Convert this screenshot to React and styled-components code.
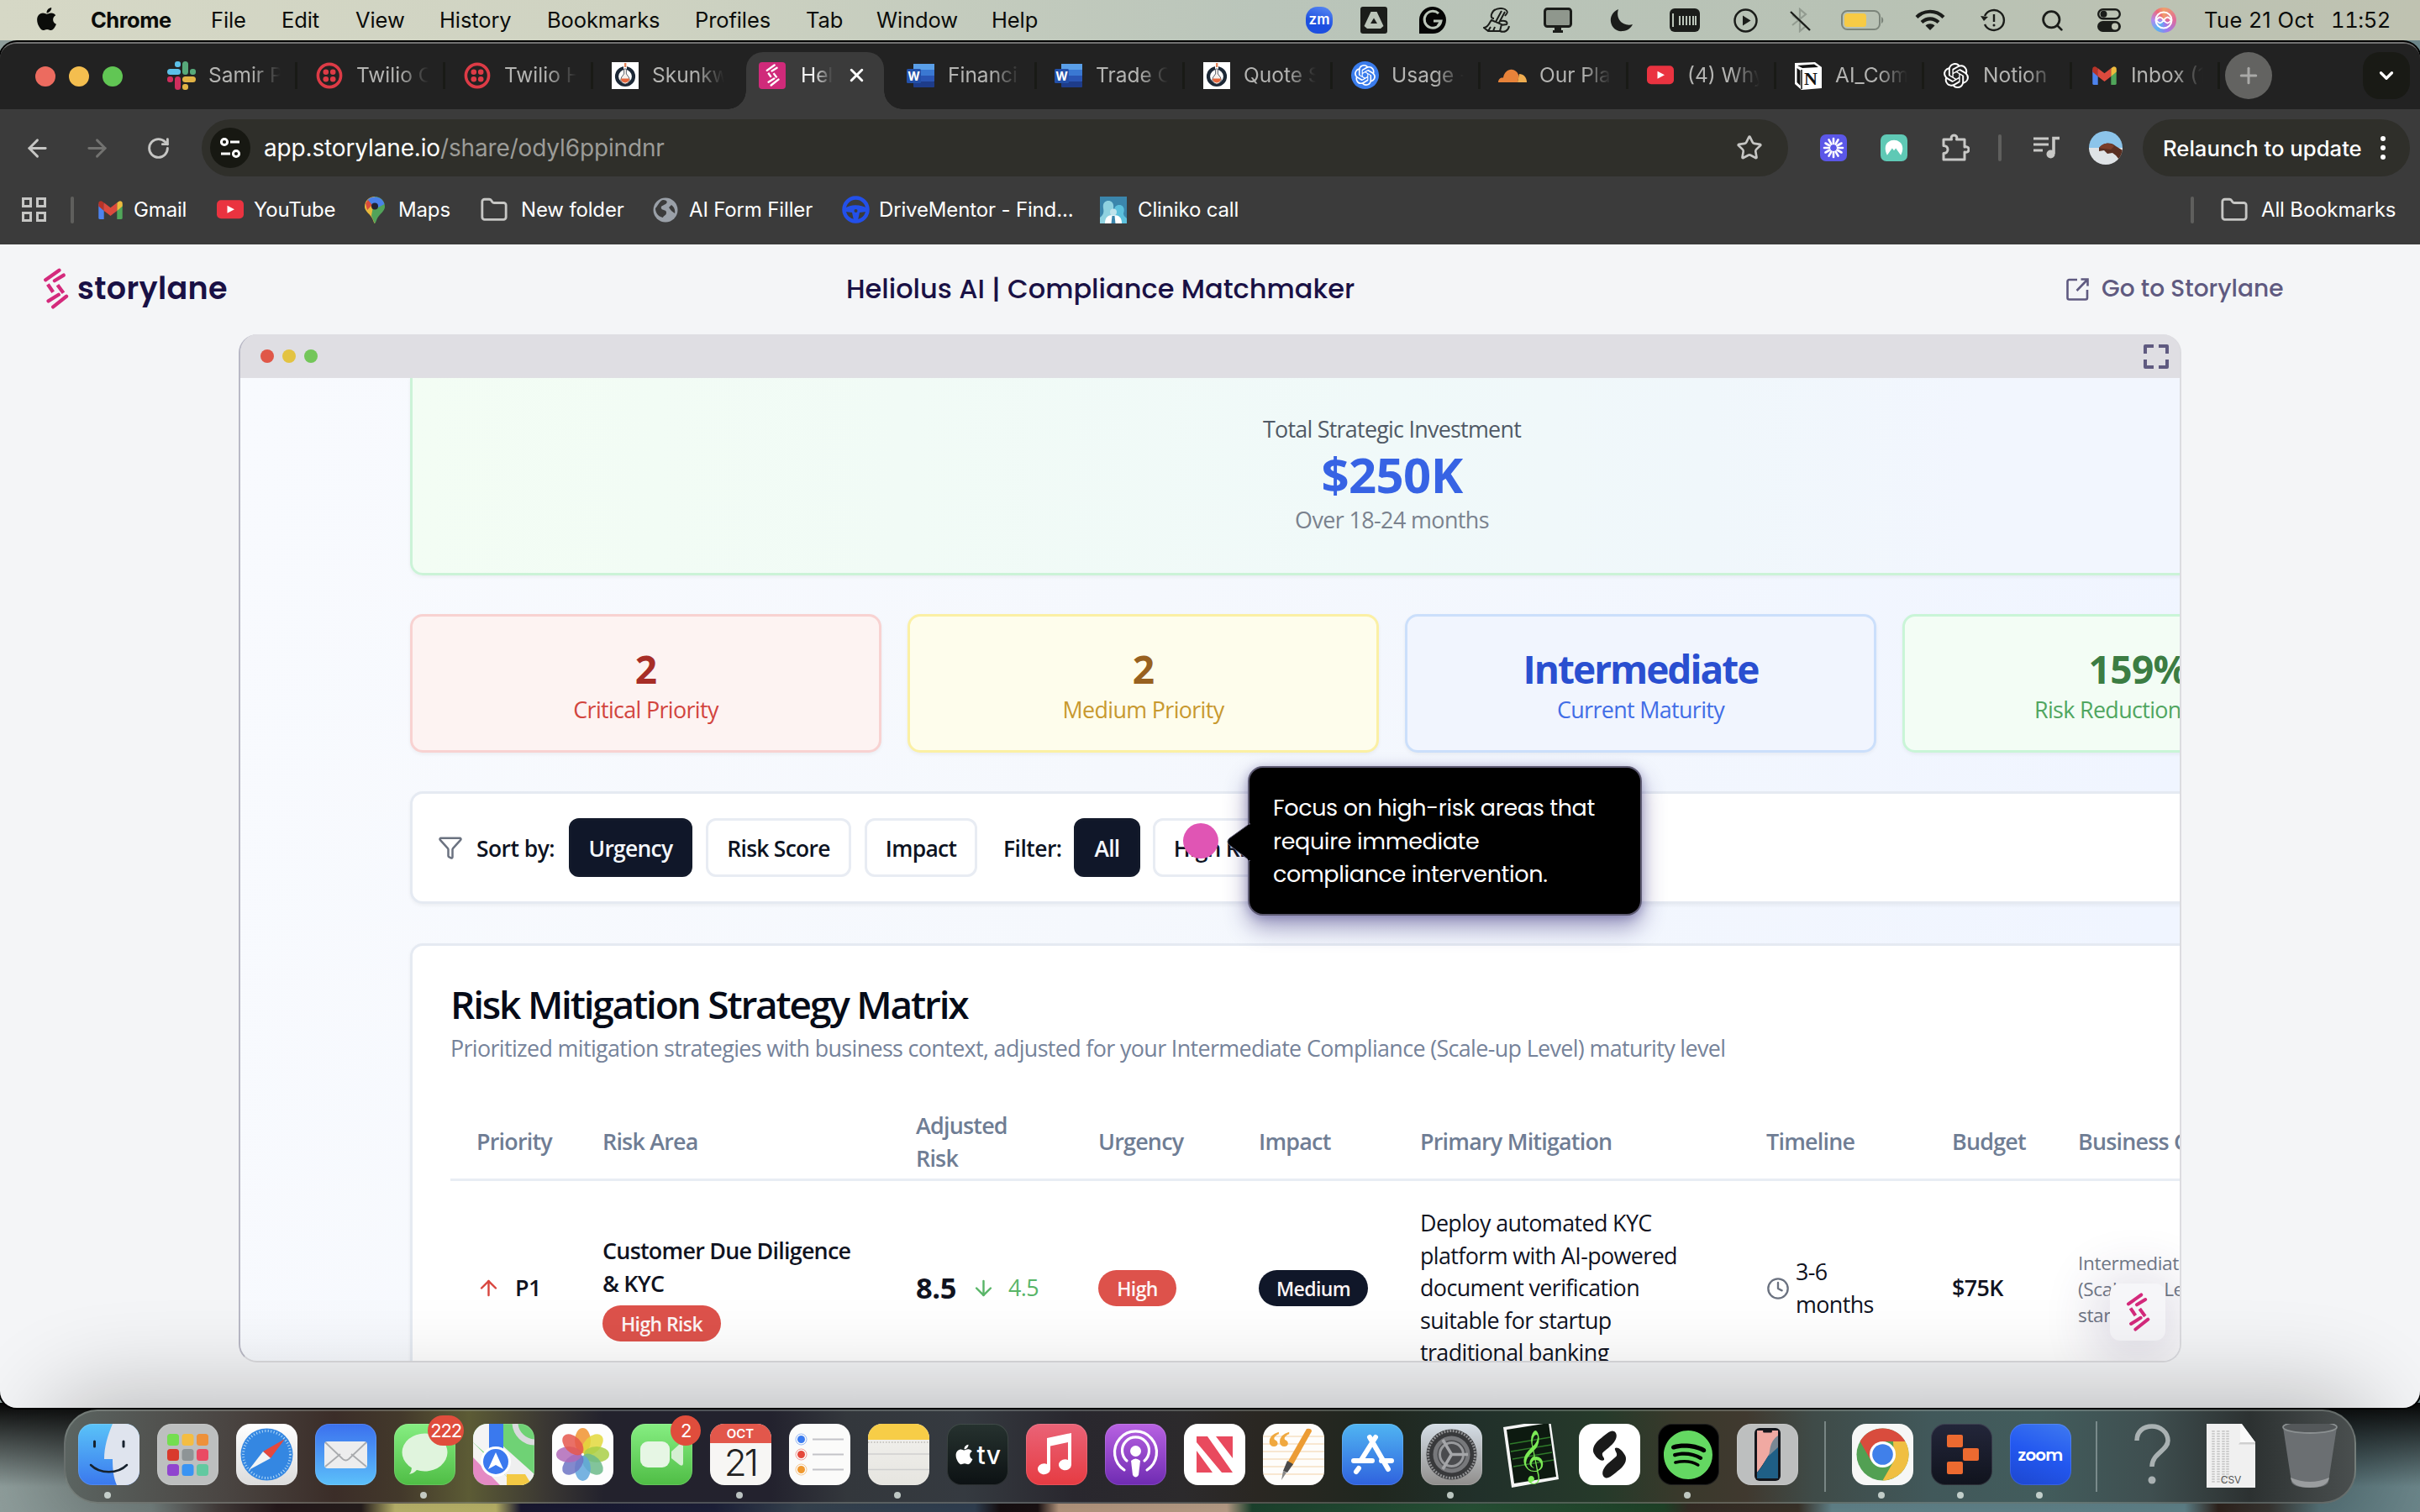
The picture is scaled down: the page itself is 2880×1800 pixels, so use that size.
import React from "react";
import styled, { createGlobalStyle, css } from "styled-components";
import {
  ArrowLeft, ArrowRight, RotateCw, Star, Folder, X, Plus, ChevronDown,
  ArrowUp, ArrowDown, Clock, Filter, Search,
} from "lucide-react";
import { FaApple } from "react-icons/fa";
import { SiOpenai, SiSpotify } from "react-icons/si";

const Global = createGlobalStyle`
  * { box-sizing: border-box; }
  html, body { margin: 0; padding: 0; overflow: hidden; }
  body { font-family: Inter, "Liberation Sans", sans-serif; }
  svg { display: block; flex: none; }
`;

/* ---------- desktop ---------- */
const Desktop = styled.div`
  width: 2880px;
  height: 1800px;
  overflow: hidden;
  display: flex;
  flex-direction: column;
  background:
    linear-gradient(to bottom, #060606 0, transparent 100px) 0 1670px / 100% 130px no-repeat,
    linear-gradient(90deg, #8f9e9c 0, #7f8c8a 180px, #4a4240 260px, #2a1c1e 330px, #2a2120 430px, #cfc878 470px, #cdc673 590px,
      #1b1a36 620px, #20243f 850px, #3c4a58 950px, #35465a 1160px, #181012 1190px, #1c1214 1235px, #c9a78c 1260px, #cdb097 1460px,
      #1f4a33 1490px, #2c5a3c 1750px, #224a2c 1980px, #3a3028 2010px, #40382e 2140px, #6d929a 2180px, #6a9098 2600px, #33261f 2640px, #3d3a36 2700px, #5c7a80 2760px, #6c868a 2880px);
`;

/* ---------- menu bar ---------- */
const MenuBar = styled.div`
  height: 48px;
  flex: none;
  display: flex;
  align-items: center;
  padding-left: 40px;
  font-size: 25.5px;
  color: #0b0c0a;
  background: linear-gradient(90deg, #d6d8c6 0, #cfd3c2 750px, #bac5ba 1500px, #b8c2b5 2200px, #bfc2b1 2880px);
`;
const MenuItem = styled.div`
  width: ${(p) => p.$w}px;
  flex: none;
  padding-bottom: 2px;
  white-space: nowrap;
  font-weight: ${(p) => (p.$bold ? 700 : 430)};
  letter-spacing: ${(p) => (p.$bold ? "-0.5px" : "-0.1px")};
`;
const AppleSlot = styled.div`
  width: 68px;
  padding-bottom: 3px;
`;
const StatusArea = styled.div`
  margin-left: auto;
  display: flex;
  align-items: center;
  padding-right: 38px;
`;
const StatusSlot = styled.div`
  width: ${(p) => p.$w || 36}px;
  margin-left: ${(p) => p.$ml}px;
  display: flex;
  justify-content: center;
  color: #1b1d1a;
`;
const StatusText = styled.div`
  margin-left: ${(p) => p.$ml}px;
  width: ${(p) => p.$w}px;
  padding-bottom: 2px;
  white-space: nowrap;
  font-weight: 430;
  letter-spacing: ${(p) => p.$ls}px;
  font-variant-numeric: ${(p) => (p.$tabular ? "tabular-nums" : "normal")};
`;
const ZoomBubble = styled.div`
  width: 32px;
  height: 32px;
  border-radius: 14px;
  background: linear-gradient(200deg, #5b8cf4, #1d4fe0 60%);
  color: #fff;
  font-size: 17px;
  font-weight: 600;
  line-height: 30px;
  text-align: center;
`;
const Siri = styled.div`
  width: 30px;
  height: 30px;
  border-radius: 50%;
  background: conic-gradient(#f0a06a, #e06a9a 25%, #9a7af0 45%, #5ab4f0 60%, #b08af0 75%, #ee6a7a 90%, #f0a06a);
  display: flex;
  align-items: center;
  justify-content: center;
`;

/* ---------- chrome window ---------- */
const Window = styled.div`
  margin-top: 2px;
  height: 1626px;
  flex: none;
  display: flex;
  flex-direction: column;
  overflow: hidden;
  border-radius: 20px;
  border-top: 2px solid #717171;
  background: #3b3b3b;
  box-shadow: 0 0 0 2px #000;
`;
const TabStrip = styled.div`
  height: 78px;
  flex: none;
  display: flex;
  align-items: stretch;
  background: #222;
`;
const Lights = styled.div`
  width: 178px;
  flex: none;
  padding-left: 42px;
  display: flex;
  align-items: center;
  gap: 16px;
`;
const Light = styled.i`
  width: 24px;
  height: 24px;
  border-radius: 50%;
  background: ${(p) => p.$c};
`;
const Tab = styled.div`
  width: 176px;
  height: 75px;
  flex: none;
  display: flex;
  align-items: center;
  padding-left: 21px;
  &::after {
    content: "";
    width: 3px;
    height: 32px;
    margin-left: auto;
    background: ${(p) => (p.$plain ? "transparent" : "#191a16")};
  }
`;
const ActiveTab = styled.div`
  position: relative;
  width: 164px;
  height: 68px;
  margin: 10px 6px 0;
  flex: none;
  display: flex;
  align-items: center;
  padding: 0 0 13px 14px;
  border-radius: 20px 20px 0 0;
  background: #3b3b3b;
  color: #fff;
  &::before, &::after {
    content: "";
    position: absolute;
    bottom: 0;
    width: 22px;
    height: 22px;
  }
  &::before {
    left: -22px;
    background: radial-gradient(circle at 0 0, transparent 21.5px, #3b3b3b 22px);
  }
  &::after {
    right: -22px;
    background: radial-gradient(circle at 100% 0, transparent 21.5px, #3b3b3b 22px);
  }
`;
const Favicon = styled.div`
  width: 34px;
  height: 34px;
  flex: none;
  display: flex;
  align-items: center;
  justify-content: center;
`;
const PinkTile = styled.div`
  width: 32px;
  height: 32px;
  border-radius: 4px;
  background: #d02a7a;
  display: flex;
  align-items: center;
  justify-content: center;
`;
const TabTitle = styled.div`
  width: ${(p) => p.$w || 86}px;
  margin-left: ${(p) => p.$ml || 15}px;
  padding-bottom: 1px;
  overflow: hidden;
  white-space: nowrap;
  font-size: 24.5px;
  letter-spacing: 0;
  color: ${(p) => (p.$on ? "#f2f2f2" : "#b4b4b2")};
  mask-image: linear-gradient(90deg, #000 ${(p) => (p.$on ? 40 : 60)}%, transparent);
`;
const CloseIcon = styled.div`
  margin-left: 16px;
  color: #fff;
`;
const RoundButton = styled.div`
  width: 56px;
  height: 56px;
  margin: 10px 0 0 ${(p) => p.$ml}px;
  flex: none;
  border-radius: ${(p) => p.$r};
  background: ${(p) => p.$bg};
  color: ${(p) => p.$fg};
  display: flex;
  align-items: center;
  justify-content: center;
`;
const Toolbar = styled.div`
  height: 92px;
  flex: none;
  display: flex;
  align-items: center;
  padding-left: 24px;
`;
const NavIcon = styled.div`
  width: 40px;
  margin-right: ${(p) => p.$mr}px;
  color: ${(p) => (p.$dim ? "#727270" : "#c6c6c4")};
  display: flex;
  justify-content: center;
`;
const Omnibox = styled.div`
  width: 1888px;
  height: 68px;
  flex: none;
  border-radius: 34px;
  background: #2f2f2a;
  display: flex;
  align-items: center;
  padding: 0 30px 0 10px;
`;
const SiteInfo = styled.div`
  width: 48px;
  height: 48px;
  border-radius: 50%;
  background: #171812;
  display: flex;
  align-items: center;
  justify-content: center;
`;
const Url = styled.div`
  margin-left: 16px;
  flex: 1;
  font-size: 28px;
  letter-spacing: -0.15px;
  color: #9c9c98;
  b { color: #fff; font-weight: 400; }
`;
const Extensions = styled.div`
  flex: none;
  display: flex;
  align-items: center;
  padding-left: 38px;
  color: #c8c8c6;
`;
const ExtTile = styled.div`
  width: 32px;
  height: 32px;
  border-radius: 7px;
  margin-right: 40px;
  background: ${(p) => p.$bg};
  display: flex;
  align-items: center;
  justify-content: center;
`;
const Divider = styled.i`
  width: 4px;
  height: 32px;
  border-radius: 2px;
  background: #5f5f5d;
  margin: 0 ${(p) => p.$r}px 0 ${(p) => p.$l}px;
`;
const Avatar = styled.div`
  width: 40px;
  height: 40px;
  border-radius: 50%;
  overflow: hidden;
  margin: 0 24px 0 34px;
`;
const Relaunch = styled.div`
  width: 318px;
  height: 68px;
  border-radius: 34px;
  background: #2f2f2a;
  color: #fff;
  display: flex;
  align-items: center;
  padding-left: 24px;
  font-size: 25.7px;
  font-weight: 450;
  white-space: nowrap;
  svg { margin-left: auto; margin-right: 29px; }
`;
const Bookmarks = styled.div`
  height: 69px;
  padding: 0 29px 14px 26px;
  flex: none;
  display: flex;
  align-items: center;
  color: #fff;
  font-size: 24px;
  font-weight: 430;
  letter-spacing: -0.15px;
`;
const Bookmark = styled.div`
  width: ${(p) => p.$w}px;
  flex: none;
  display: flex;
  align-items: center;
  gap: ${(p) => p.$gap || 14}px;
  white-space: nowrap;
  color: #fff;
`;
const Spacer = styled.div`
  flex: 1;
`;

/* ---------- storylane page ---------- */
const Page = styled.div`
  flex: 1;
  background: #f4f5f7;
  display: flex;
  flex-direction: column;
`;
const PageHeader = styled.div`
  height: 107px;
  flex: none;
  display: grid;
  grid-template-columns: 1007px 1452px 1fr;
  align-items: center;
  padding-bottom: 1px;
  font-family: Poppins, Inter, sans-serif;
`;
const Brand = styled.div`
  display: flex;
  align-items: center;
  padding-left: 51px;
  padding-bottom: 1px;
  gap: 10px;
  color: #1a1145;
  font-size: 36.5px;
  font-weight: 600;
  letter-spacing: 0.35px;
  line-height: 40px;
`;
const PageTitle = styled.div`
  color: #1a1145;
  font-size: 32px;
  font-weight: 500;
  letter-spacing: 0;
`;
const GoLink = styled.div`
  display: flex;
  align-items: center;
  gap: 15px;
  color: #5f5a80;
  font-size: 28px;
  font-weight: 500;
  white-space: nowrap;
`;
const Demo = styled.div`
  position: relative;
  width: 2312px;
  height: 1224px;
  margin-left: 284px;
  flex: none;
  display: flex;
  flex-direction: column;
  overflow: hidden;
  border-radius: 22px;
  border: 2px solid #dcdce0;
  border-left-color: #b9b9c6;
  border-top: 0;
  background: #dfdee3;
`;
const DemoBar = styled.div`
  height: 52px;
  flex: none;
  margin: 0 -2px;
  display: flex;
  align-items: center;
  gap: 10px;
  padding: 0 15px 0 26px;
  background: #dfdee3;
`;
const Dot = styled.i`
  width: 16px;
  height: 16px;
  border-radius: 50%;
  background: ${(p) => p.$c};
`;
const Viewport = styled.div`
  flex: 1;
  overflow: hidden;
  padding-left: 202px;
  background: linear-gradient(100deg, #f8fafe 0, #f5f8fd 45%, #f0f5ff 95%);
  font-family: "Open Sans", "Noto Sans", sans-serif;
`;
const Canvas = styled.div`
  width: 2337px;
  display: flex;
  flex-direction: column;
`;
const Summary = styled.div`
  height: 235px;
  border: 3px solid #cbf3d7;
  border-top: 0;
  border-radius: 0 0 15px 15px;
  background: linear-gradient(90deg, #f3fdf4 0, #f1fbf6 25%, #f0f9f9 50%, #f0f7fb 66%, #f2f6fe 80%);
  box-shadow: 0 2px 4px rgba(0, 0, 0, 0.05);
  display: flex;
  flex-direction: column;
  align-items: center;
  padding-top: 42px;
  color: #505a66;
  font-size: 26.9px;
  line-height: 38px;
`;
const SummaryValue = styled.div`
  color: #3763e4;
  font-size: 58px;
  line-height: 70px;
  font-weight: 700;
  letter-spacing: -0.6px;
`;
const SummaryNote = styled.div`
  color: #7a828e;
  letter-spacing: -0.6px;
`;
const SummaryLabel = styled.div`
  letter-spacing: -0.75px;
`;
const Stats = styled.div`
  margin-top: 46px;
  display: grid;
  grid-template-columns: repeat(4, 1fr);
  gap: 31px;
`;
const StatCard = styled.div`
  height: 165px;
  border-radius: 15px;
  border: 3px solid ${(p) => p.$border};
  background: ${(p) => p.$bg};
  color: ${(p) => p.$label};
  box-shadow: 0 2px 4px rgba(0, 0, 0, 0.05);
  text-align: center;
  padding-top: 32px;
  font-size: 26.9px;
  line-height: 36px;
  letter-spacing: -0.66px;
`;
const StatValue = styled.div`
  color: ${(p) => p.$c};
  font-size: 46px;
  line-height: 61px;
  font-weight: 700;
  letter-spacing: ${(p) => p.$ls || -0.6}px;
`;
const cardBase = css`
  border: 3px solid #e5eaf2;
  border-radius: 15px;
  background: #fff;
  box-shadow: 0 2px 4px rgba(0, 0, 0, 0.05);
`;
const Controls = styled.div`
  ${cardBase}
  margin-top: 46px;
  height: 134px;
  display: flex;
  align-items: center;
  padding-left: 30px;
  color: #0d1322;
  font-size: 26.4px;
  font-weight: 600;
  white-space: nowrap;
`;
const ControlLabel = styled.div`
  width: ${(p) => p.$w}px;
  margin-left: ${(p) => p.$ml}px;
  padding-top: 2px;
  letter-spacing: -0.5px;
`;
const Button = styled.div`
  width: ${(p) => p.$w}px;
  height: 70px;
  margin-left: ${(p) => p.$ml}px;
  padding-top: 2px;
  border-radius: 12px;
  border: 3px solid ${(p) => (p.$on ? "#131a2b" : "#e8ecf3")};
  background: ${(p) => (p.$on ? "#101729" : "#fff")};
  color: ${(p) => (p.$on ? "#f5f8fc" : "#0d1322")};
  display: flex;
  align-items: center;
  justify-content: center;
  letter-spacing: -0.7px;
`;
const Matrix = styled.div`
  ${cardBase}
  margin-top: 47px;
  height: 700px;
  padding: 38px 0 0 45px;
`;
const MatrixTitle = styled.div`
  color: #060b18;
  font-size: 46px;
  line-height: 62px;
  font-weight: 600;
  letter-spacing: -2.2px;
  white-space: nowrap;
`;
const MatrixSub = styled.div`
  margin-top: 3px;
  color: #76839a;
  font-size: 26.9px;
  line-height: 38px;
  letter-spacing: -0.65px;
  white-space: nowrap;
`;
const Row = styled.div`
  display: grid;
  grid-template-columns: 150px 373px 217px 191px 192px 412px 221px 150px 500px;
  align-items: center;
  font-size: 26.9px;
  line-height: 38.4px;
  letter-spacing: -0.62px;
`;
const HeadRow = styled(Row)`
  margin-top: 48px;
  height: 91px;
  padding-top: 1px;
  border-bottom: 3px solid #e8edf4;
  color: #6f7d94;
  font-weight: 600;
  letter-spacing: -0.78px;
`;
const BodyRow = styled(Row)`
  height: 254px;
  padding-top: 1px;
  color: #10131f;
`;
const Cell = styled.div`
  padding-left: 31px;
  display: flex;
  align-items: center;
  white-space: nowrap;
  gap: ${(p) => p.$gap || 0}px;
  font-weight: ${(p) => p.$fw || "inherit"};
`;
const RiskName = styled.div`
  font-weight: 600;
  letter-spacing: -0.75px;
`;
const Score = styled.div`
  font-size: 34.5px;
  font-weight: 700;
  width: 54px;
  letter-spacing: -0.4px;
`;
const Delta = styled.div`
  margin-left: 3px;
  color: #58b567;
`;
const Badge = styled.div`
  display: inline-flex;
  align-items: center;
  justify-content: center;
  width: ${(p) => p.$w}px;
  height: 43px;
  padding-top: 1px;
  border-radius: 22px;
  background: ${(p) => (p.$dark ? "#101729" : "#dd524b")};
  color: #fdf5f5;
  font-size: 23px;
  font-weight: 600;
  letter-spacing: -0.6px;
`;
const BadgeLine = styled.div`
  display: flex;
  padding-top: 7px;
`;
const Context = styled.div`
  font-size: 22.6px;
  line-height: 31px;
  color: #717986;
  letter-spacing: -0.35px;
  word-spacing: 4px;
  padding-top: 2px;
`;

const Tooltip = styled.div`
  position: absolute;
  left: 1199px;
  top: 514px;
  width: 469px;
  height: 178px;
  padding: 28px 28px 0;
  border-radius: 18px;
  border: 2px solid #5d5a72;
  background: #000;
  color: #fff;
  font: 400 27px/39.7px Poppins, Inter, sans-serif;
  letter-spacing: -0.37px;
  white-space: pre;
  box-shadow: 0 14px 28px rgba(50, 42, 120, 0.45), 0 2px 12px rgba(50, 42, 120, 0.3);
`;
const TooltipArrow = styled.svg`
  position: absolute;
  left: -29px;
  top: 64px;
`;
const Hotspot = styled.i`
  position: absolute;
  left: 1122px;
  top: 582px;
  width: 42px;
  height: 42px;
  border-radius: 50%;
  background: #e055b4;
`;
const Widget = styled.div`
  position: absolute;
  right: 17px;
  bottom: 24px;
  width: 66px;
  height: 68px;
  border-radius: 12px;
  background: #f6f6f9;
  box-shadow: 0 8px 60px 20px rgba(60, 40, 100, 0.14);
  display: flex;
  align-items: center;
  justify-content: center;
`;

/* ---------- dock ---------- */
const Dock = styled.div`
  position: relative;
  width: 2728px;
  height: 112px;
  margin: 2px 0 0 76px;
  flex: none;
  display: flex;
  padding: 15px 0 0 4px;
  border: 2px solid rgba(170, 180, 175, 0.32);
  border-radius: 40px;
  background: linear-gradient(90deg, #5b6461 0, #4a4542 190px, #3b2d28 320px, #43392b 400px, #5c5b35 480px, #3b3833 570px, #23222d 640px,
    #23222e 840px, #33373c 930px, #353a40 1070px, #29272e 1200px, #2c2a2c 1330px, #2a2722 1420px, #20271f 1560px, #21302a 1680px,
    #263a2a 1830px, #39392b 1920px, #40392f 2000px, #3f4b48 2080px, #41585a 2220px, #425c5c 2350px, #3f4f50 2480px, #2c3131 2600px, #4b5050 2728px);
  box-shadow: 0 0 110px 20px rgba(0, 0, 0, 0.24);
`;
const DockCell = styled.div`
  position: relative;
  width: 94px;
  flex: none;
  display: flex;
  justify-content: center;
  &::after {
    content: "";
    position: absolute;
    left: 42px;
    bottom: 4px;
    width: 8px;
    height: 8px;
    border-radius: 50%;
    background: ${(p) => (p.$run ? "rgba(225,235,230,.8)" : "transparent")};
  }
`;
const Tile = styled.div`
  width: 73px;
  height: 73px;
  border-radius: 17px;
  overflow: hidden;
  background: ${(p) => p.$bg};
  display: flex;
  align-items: center;
  justify-content: center;
  color: #fff;
  box-shadow: inset 0 0 0 1px rgba(255, 255, 255, 0.12);
`;
const CountBadge = styled.div`
  position: absolute;
  right: 0;
  top: -10px;
  min-width: 36px;
  height: 36px;
  padding: 0 3px;
  border-radius: 18px;
  background: #e04d3c;
  color: #fff;
  font-size: 22px;
  line-height: 36px;
  letter-spacing: -1.2px;
  text-align: center;
`;
const DockDivider = styled.div`
  width: ${(p) => p.$w}px;
  flex: none;
  display: flex;
  justify-content: center;
  &::after {
    content: "";
    width: 2px;
    height: 84px;
    margin-top: -3px;
    background: rgba(190, 205, 205, 0.45);
  }
`;
const CalTile = styled.div`
  width: 73px;
  height: 73px;
  border-radius: 17px;
  overflow: hidden;
  background: #f7f6f4;
  text-align: center;
`;
const CalMonth = styled.div`
  height: 23px;
  background: #e2574b;
  color: #fff;
  font-size: 15px;
  line-height: 24px;
  font-weight: 600;
`;
const CalDay = styled.div`
  font-size: 44px;
  line-height: 46px;
  font-weight: 300;
  letter-spacing: -3px;
  color: #222;
`;
const TvTile = styled(Tile)`
  font-size: 30px;
  font-weight: 500;
  letter-spacing: 0.5px;
  gap: 1px;
`;
const ZoomTile = styled(Tile)`
  font: 600 20px Poppins, Inter, sans-serif;
  letter-spacing: -0.8px;
`;

/* ---------- drawings ---------- */
const StoryMark = ({ w, h, c = "#d42a7c" }) => (
  <svg width={w} height={h} viewBox="34 40 92 148" fill="none" stroke={c} strokeWidth="13">
    <path strokeLinecap="round" d="M43 83 92 48M53 159 90 136M70 180 118 142" />
    <path strokeLinecap="round" d="M75 86 108 66" />
    <path d="M51 99 70 127M86 101 107 130" />
  </svg>
);
const Slack = () => (
  <svg width="34" height="34" viewBox="0 0 34 34">
    <g fill="#5cc0e8"><rect x="0" y="9" width="16" height="7" rx="3.5" /><rect x="9" y="0" width="7" height="7" rx="3" /></g>
    <g fill="#57a97a"><rect x="18" y="0" width="7" height="16" rx="3.5" /><rect x="27" y="9" width="7" height="7" rx="3" /></g>
    <g fill="#e2b345"><rect x="18" y="18" width="16" height="7" rx="3.5" /><rect x="18" y="27" width="7" height="7" rx="3" /></g>
    <g fill="#cf2e5d"><rect x="9" y="18" width="7" height="16" rx="3.5" /><rect x="0" y="18" width="7" height="7" rx="3" /></g>
  </svg>
);
const Twilio = () => (
  <svg width="32" height="32" viewBox="0 0 32 32">
    <circle cx="16" cy="16" r="13.6" fill="none" stroke="#dd3b46" strokeWidth="3.6" />
    <g fill="#dd3b46"><circle cx="11.8" cy="11.8" r="3.3" /><circle cx="20.2" cy="11.8" r="3.3" /><circle cx="11.8" cy="20.2" r="3.3" /><circle cx="20.2" cy="20.2" r="3.3" /></g>
  </svg>
);
const Skunk = () => (
  <svg width="32" height="32" viewBox="0 0 32 32">
    <rect width="32" height="32" fill="#fff" />
    <circle cx="16" cy="17" r="10" fill="none" stroke="#1c2836" strokeWidth="4.2" />
    <path d="M14 4h4v8h-4z" fill="#fff" />
    <path d="M14.600 8v6l-3 4a5.200 5.200 0 1 0 8.800 0l-3-4V8z" fill="#f6f0ec" stroke="#1c2836" strokeWidth=".7" />
    <path d="M11 19.500a5 5 0 1 0 10 0z" fill="#e5673c" />
    <path d="M15 1h2.400v5h-2.400z" fill="#e5875c" />
  </svg>
);
const Word = () => (
  <svg width="34" height="32" viewBox="0 0 34 32">
    <rect x="8" y="2" width="25" height="9" fill="#5a9fe8" /><rect x="8" y="9" width="25" height="7" fill="#3a78d2" />
    <rect x="8" y="16" width="25" height="7" fill="#2a55b4" /><rect x="8" y="23" width="25" height="7" rx="1" fill="#1e3c8a" />
    <rect x="0" y="8" width="17" height="17" rx="1.500" fill="#2350a8" />
    <text x="8.500" y="21.500" textAnchor="middle" fontFamily="Inter, sans-serif" fontSize="14" fontWeight="700" fill="#fff">W</text>
  </svg>
);
const Youtube = ({ s = 32 }) => (
  <svg width={s} height={s * 0.7} viewBox="0 0 32 22"><rect width="32" height="22" rx="5" fill="#ea3340" /><path d="M12.500 6.500 21 11l-8.500 4.500z" fill="#fff" /></svg>
);
const Gmail = () => (
  <svg width="29" height="22" viewBox="0 0 31 24">
    <path d="M0 4h7v20H2a2 2 0 0 1-2-2z" fill="#4d83ee" /><path d="M24 4h7v18a2 2 0 0 1-2 2h-5z" fill="#50a65a" />
    <path d="M24 2.500 27 .5a3 3 0 0 1 4 2.500v4L24 13z" fill="#eebb3e" /><path d="M7 2.500 4 .5A3 3 0 0 0 0 3v4l7 6z" fill="#b83327" />
    <path d="M7 2.500 15.500 9 24 2.500V13l-8.500 6.500L7 13z" fill="#dc4a3d" />
  </svg>
);
const Pin = () => (
  <svg width="24" height="32" viewBox="0 0 24 32">
    <path d="M12 0C5 0 0 5 0 12c0 6 7 9 9.500 15 1 2 1.500 5 2.500 5z" fill="#e9b93c" />
    <path d="M12 0c7 0 12 5 12 12 0 6-7 9-9.500 15-1 2-1.500 5-2.500 5l-4-9z" fill="#52a35a" />
    <path d="M3 4.500A12 12 0 0 1 23.500 9L12 15z" fill="#4a80e8" /><path d="M1 8 4 4l5 6-6 6z" fill="#d94b3d" /><circle cx="12" cy="11.500" r="4" fill="#223" />
  </svg>
);
const Cloudflare = () => (
  <svg width="34" height="16" viewBox="0 0 34 16">
    <path d="M0 16c0-4 3-6 6-5.500C7 4 12 0 17 1c4 .6 7 4 7.500 8L23 16z" fill="#e8833a" /><path d="M25 6c5 0 9 4 9 10H23z" fill="#f0ad50" />
  </svg>
);
const Notion = () => (
  <svg width="34" height="34" viewBox="0 0 34 34">
    <path d="M1 2 25 1l8 6v25l-24 2-8-7z" fill="#fff" /><path d="M4 5l20-1.500 5 3.500L10 8zM3.500 8 7.500 11v18l-4-4z" fill="#111" />
    <path d="M9 10v23" stroke="#111" strokeWidth="1.500" />
    <rect x="10" y="10" width="20.500" height="21" fill="#fff" />
    <text x="20" y="28" textAnchor="middle" fontFamily="Liberation Serif, serif" fontWeight="700" fontSize="22" fill="#111">N</text>
  </svg>
);
const OpenAiBlue = styled.div`
  width: 33px;
  height: 33px;
  border-radius: 50%;
  background: #3b7ded;
  color: #fff;
  display: flex;
  align-items: center;
  justify-content: center;
`;
const Globe = () => (
  <svg width="30" height="30" viewBox="0 0 30 30"><circle cx="15" cy="15" r="14.500" fill="#9aa0a8" /><path d="M12 3c5 0 6 3 3 5s-6 2-5 5 6 1 6 5-3 3-4 6C6 23 3 18 3 13 6 10 8 4 12 3zM22 9c3 2 5 6 4 10l-4-3-3-4z" fill="#3b3b3b" /></svg>
);
const Wheel = () => (
  <svg width="33" height="33" viewBox="0 0 33 33" fill="none" stroke="#2350ea"><circle cx="16.500" cy="16.500" r="14" strokeWidth="4.500" /><path d="M3 15c8-5 19-5 27 0l-1 4-8 1-2 9h-5l-2-9-8-1z" fill="#2350ea" stroke="none" /><circle cx="16.500" cy="18" r="2" fill="#3b3b3b" stroke="none" /></svg>
);
const Cliniko = () => (
  <svg width="32" height="32" viewBox="0 0 32 32">
    <rect width="32" height="32" fill="#3b86ac" />
    <path d="M18 32V20c-2-6 0-10 5-10s7 5 5 10c0 3 2 4 4 6v6z" fill="#5cc0dc" />
    <path d="M0 32v-7c4-3 5-6 4-11-1-6 2-9 6-9s7 3 6 9c0 5 0 8 2 11v7z" fill="#8fd2e0" />
    <path d="M6 32c0-7 3-10 10-10s10 3 10 10z" fill="#fff" /><circle cx="16" cy="18.500" r="4" fill="#bfe3ec" /><path d="M14.500 23h3l1 9h-5z" fill="#3b86ac" />
  </svg>
);
const SiteTune = () => (
  <svg width="28" height="28" viewBox="0 0 28 28" fill="none" stroke="#fff" strokeWidth="3"><circle cx="7" cy="7" r="3.600" /><path d="M14 7h11M3 21h11" /><circle cx="21" cy="21" r="3.600" /></svg>
);
const AppsGrid = () => (
  <svg width="29" height="29" viewBox="0 0 29 29" fill="none" stroke="#c6c6c4" strokeWidth="3"><rect x="1.500" y="1.500" width="9" height="9" /><rect x="18.500" y="1.500" width="9" height="9" /><rect x="1.500" y="18.500" width="9" height="9" /><rect x="18.500" y="18.500" width="9" height="9" /></svg>
);
const Burst = () => (
  <svg width="26" height="26" viewBox="-13 -13 26 26" stroke="#fff" strokeWidth="2.600" strokeLinecap="round">
    {[...Array(12)].map((_, i) => <path key={i} d="M0 -5V-11" transform={`rotate(${i * 30})`} />)}
  </svg>
);
const PuzzlePiece = () => (
  <svg width="34" height="34" viewBox="0 0 34 34" fill="none" stroke="#c8c8c6" strokeWidth="3" strokeLinejoin="round">
    <path d="M3 7h9.500c-1-3 .5-5 3-5s4 2 3 5H28v9c3-.8 5 .6 5 3s-2 3.800-5 3v9H3v-7.500c3 0 5-1.800 5-4.500s-2-4.500-5-4.500z" />
  </svg>
);
const MediaQueue = () => (
  <svg width="34" height="30" viewBox="0 0 34 30" fill="none" stroke="#c8c8c6" strokeWidth="3.2">
    <path d="M2 4h18M2 11h18M2 18h11" /><path d="M26 22V3.500h7" strokeWidth="3.600" /><circle cx="22.500" cy="22.500" r="5" fill="#c8c8c6" stroke="none" />
  </svg>
);
const ExternalBox = () => (
  <svg width="27" height="27" viewBox="0 0 27 27" fill="none" stroke="#5f5a80" strokeWidth="2.600"><path d="M13 2H3.500A2 2 0 0 0 1.500 4v19.500a2 2 0 0 0 2 2h19.500a2 2 0 0 0 2-2V14M17.500 1.500H25.500V9.500M25.500 1.500 12.500 15" /></svg>
);
const Expand = () => (
  <svg width="30" height="29" viewBox="0 0 30 29" fill="none" stroke="#5f5a80" strokeWidth="4"><path d="M2 11V2H12M18 2H28V11M28 18V27H18M12 27H2V18" strokeLinejoin="round" /></svg>
);

const StatusIcons = () => (
  <>
    <StatusSlot $ml={0}><ZoomBubble>zm</ZoomBubble></StatusSlot>
    <StatusSlot $ml={29}><svg width="32" height="32" viewBox="0 0 32 32"><rect width="32" height="32" rx="3" fill="#1b1d1a" /><path d="M12.500 6h7l8 17-3.500 3h-16l-3.500-3z" fill="#bbc5b9" /><path d="M16 13.500 20 20h-8z" fill="#1b1d1a" /></svg></StatusSlot>
    <StatusSlot $ml={34}><svg width="32" height="32" viewBox="0 0 32 32"><path d="M0 32V15A16 16 0 1 1 16 32z" fill="#050505" /><path d="M23 8A10 10 0 1 0 26 17H17M26 17l-4 6" fill="none" stroke="#bbc5b9" strokeWidth="3" /></svg></StatusSlot>
    <StatusSlot $ml={40}><svg width="32" height="30" viewBox="0 0 32 30" fill="none" stroke="#1b1d1a" strokeWidth="2"><path d="M29 6C28-1 13-1 10 8c-1 4 1 5 3 5M22 4 15 17M26 5 19 18M29 6l-3 4M10 15l12 5-2 8H6l-5-4c6-1 6-6 9-9zM6 28l3-5M12 28l2-5M21 16c5-1 9 1 7 4l-7 1M20 28c5 2 10 0 11-6" /></svg></StatusSlot>
    <StatusSlot $ml={37}><svg width="34" height="30" viewBox="0 0 34 30"><rect x="1.500" y="1.500" width="31" height="21" rx="3" fill="#8f978d" stroke="#1b1d1a" strokeWidth="3" /><path d="M13 24h8v3h2v3H11v-3h2z" fill="#1b1d1a" /></svg></StatusSlot>
    <StatusSlot $ml={40}><svg width="28" height="28" viewBox="0 0 28 28"><path d="M10 1C3 4 0 10 1 16c1 7 7 12 14 11 6 0 10-4 12-8C17 22 6 14 10 1z" fill="#1b1d1a" /></svg></StatusSlot>
    <StatusSlot $ml={39}><svg width="36" height="28" viewBox="0 0 36 28"><rect width="36" height="28" rx="6" fill="#1b1d1a" /><path d="M4 6v16M12 9v11M16 9v11M20 9v11M24 9v11M28 9v11M31 9v11" stroke="#bbc5b9" strokeWidth="2" /></svg></StatusSlot>
    <StatusSlot $ml={36}><svg width="29" height="29" viewBox="0 0 29 29"><circle cx="14.500" cy="14.500" r="13" fill="none" stroke="#1b1d1a" strokeWidth="2.500" /><path d="M11 8.500 20.500 14.500 11 20.500z" fill="#1b1d1a" /></svg></StatusSlot>
    <StatusSlot $ml={30}><svg width="26" height="30" viewBox="0 0 26 30" fill="none"><path d="M3 9 19 22 12 28V2l7 6L3 21" stroke="#929b90" strokeWidth="2.200" /><path d="M1 5 24 27" stroke="#1b1d1a" strokeWidth="2.400" /></svg></StatusSlot>
    <StatusSlot $ml={30} $w={50}><svg width="51" height="24" viewBox="0 0 51 24"><rect x="1" y="1" width="45" height="22" rx="6.500" fill="none" stroke="#7b847a" strokeWidth="2" /><rect x="4" y="4" width="26" height="16" rx="3.500" fill="#f7cb45" /><path d="M48 8c3 1.500 3 6.500 0 8z" fill="#7b847a" /></svg></StatusSlot>
    <StatusSlot $ml={38}><svg width="36" height="26" viewBox="0 0 36 26" fill="none" stroke="#1b1d1a" strokeWidth="4.200"><path d="M2 9.500C11 .5 25 .5 34 9.500M8 15.500c6-5.500 14-5.500 20 0" /><path d="M18 25l-5.500-5.500c3-3 8-3 11 0z" fill="#1b1d1a" stroke="none" /></svg></StatusSlot>
    <StatusSlot $ml={39}><svg width="30" height="28" viewBox="0 0 30 28" fill="none" stroke="#1b1d1a" strokeWidth="2.400"><path d="M5 9A12 12 0 1 1 5 19M16 7v9" /><path d="M0 9l4 6 5-5z" fill="#1b1d1a" stroke="none" /><circle cx="16" cy="20" r="1.500" fill="#1b1d1a" stroke="none" /></svg></StatusSlot>
    <StatusSlot $ml={34}><Search size={29} strokeWidth={2.3} /></StatusSlot>
    <StatusSlot $ml={32}><svg width="28" height="28" viewBox="0 0 28 28"><rect x="1.200" y="1.200" width="25.600" height="11" rx="5.500" fill="none" stroke="#1b1d1a" strokeWidth="2.400" /><circle cx="7.500" cy="6.700" r="4" fill="#1b1d1a" /><rect y="15" width="28" height="13" rx="6.500" fill="#1b1d1a" /><circle cx="21" cy="21.500" r="4" fill="#bfc4b4" /></svg></StatusSlot>
    <StatusSlot $ml={29}><Siri><svg width="22" height="22" viewBox="0 0 22 22" fill="none" stroke="#fff" strokeWidth="2"><circle cx="11" cy="11" r="9.500" /><path d="M2 11c4-5 6-4 9 0s5 5 9 0c-4-5-6-4-9 0s-5 5-9 0" /></svg></Siri></StatusSlot>
  </>
);

const MENU = [["File", 84], ["Edit", 88], ["View", 100], ["History", 128], ["Bookmarks", 176], ["Profiles", 132], ["Tab", 84], ["Window", 137], ["Help", 80]];
const TABS_LEFT = [[<Slack />, "Samir P"], [<Twilio />, "Twilio C"], [<Twilio />, "Twilio H"], [<Skunk />, "Skunkw", true]];
const TABS_RIGHT = [
  [<Word />, "Financi"], [<Word />, "Trade C"], [<Skunk />, "Quote S"],
  [<OpenAiBlue><SiOpenai size={25} /></OpenAiBlue>, "Usage -"], [<Cloudflare />, "Our Pla"], [<Youtube />, "(4) Why"],
  [<Notion />, "AI_Com"], [<SiOpenai size={30} color="#fff" />, "Notion"], [<Gmail />, "Inbox (1"],
];
const STATS = [
  { n: "2", l: "Critical Priority", bg: "#fdf3f2", border: "#f8d2d1", c: "#a72d27", label: "#d2453e" },
  { n: "2", l: "Medium Priority", bg: "#fefdec", border: "#fbf0a4", c: "#986120", label: "#c8992f" },
  { n: "Intermediate", l: "Current Maturity", bg: "#f1f5fe", border: "#cbdffb", c: "#2a4fd0", label: "#416de6", ls: -2 },
  { n: "159%", l: "Risk Reduction Value", bg: "#f3fdf5", border: "#c9f5d7", c: "#3c7d43", label: "#50a660" },
];

function TabView({ icon, title, plain }) {
  return (
    <Tab $plain={plain}>
      <Favicon>{icon}</Favicon>
      <TabTitle>{title}</TabTitle>
    </Tab>
  );
}

function Browser() {
  return (
    <>
      <TabStrip>
        <Lights><Light $c="#ec6b5f" /><Light $c="#f4be4f" /><Light $c="#61c654" /></Lights>
        {TABS_LEFT.map(([icon, t, p]) => <TabView key={t} icon={icon} title={t} plain={p} />)}
        <ActiveTab>
          <Favicon><PinkTile><StoryMark w={17} h={27} c="#fff" /></PinkTile></Favicon>
          <TabTitle $on $w={38} $ml={17}>Heli</TabTitle>
          <CloseIcon><X size={25} strokeWidth={2.8} /></CloseIcon>
        </ActiveTab>
        {TABS_RIGHT.map(([icon, t]) => <TabView key={t} icon={icon} title={t} />)}
        <RoundButton $ml={6} $r="50%" $bg="#636361" $fg="#a9a9a7"><Plus size={30} strokeWidth={2.4} /></RoundButton>
        <RoundButton $ml={108} $r="20px" $bg="#191a15" $fg="#fff"><ChevronDown size={26} strokeWidth={3} /></RoundButton>
      </TabStrip>
      <Toolbar>
        <NavIcon $mr={31}><ArrowLeft size={33} strokeWidth={2.1} /></NavIcon>
        <NavIcon $mr={33} $dim><ArrowRight size={33} strokeWidth={2.1} /></NavIcon>
        <NavIcon $mr={32}><RotateCw size={29} strokeWidth={2.4} /></NavIcon>
        <Omnibox>
          <SiteInfo><SiteTune /></SiteInfo>
          <Url><b>app.storylane.io</b>/share/odyl6ppindnr</Url>
          <Star size={32} color="#c6c6c4" strokeWidth={2} />
        </Omnibox>
        <Extensions>
          <ExtTile $bg="#5b57e8"><Burst /></ExtTile>
          <ExtTile $bg="#5fc9b5"><svg width="26" height="26" viewBox="0 0 24 24"><path d="M4.500 20C-1 9 6 3.500 12 3.500S25 9 19.500 20L14 12.500l-2 2.500-2-2.500z" fill="#fff" /></svg></ExtTile>
          <PuzzlePiece />
          <Divider $l={34} $r={36} />
          <MediaQueue />
          <Avatar><svg width="40" height="40" viewBox="0 0 40 40"><rect width="40" height="22" fill="#8cc4ea" /><rect y="20" width="40" height="20" fill="#dfe3e6" /><path d="M12 20c4-6 14-8 20-2l8 5v16l-8-10-4-3-6 1-4-4-6 1z" fill="#5a2f22" /><path d="M12 20c5-6 13-7 18-2l-4 4z" fill="#7a3c28" /></svg></Avatar>
          <Relaunch>Relaunch to update<svg width="6" height="30" viewBox="0 0 6 30" fill="#fff"><circle cx="3" cy="4" r="3" /><circle cx="3" cy="15" r="3" /><circle cx="3" cy="26" r="3" /></svg></Relaunch>
        </Extensions>
      </Toolbar>
      <Bookmarks>
        <AppsGrid />
        <Divider $l={29} $r={29} />
        <Bookmark $w={141} $gap={13}><Gmail />Gmail</Bookmark>
        <Bookmark $w={176} $gap={12}><Youtube />YouTube</Bookmark>
        <Bookmark $w={137} $gap={16}><Pin />Maps</Bookmark>
        <Bookmark $w={206} $gap={15}><Folder size={34} color="#c6c6c4" strokeWidth={2} />New folder</Bookmark>
        <Bookmark $w={225} $gap={13}><Globe />AI Form Filler</Bookmark>
        <Bookmark $w={307} $gap={11}><Wheel />DriveMentor - Find...</Bookmark>
        <Bookmark $w={200} $gap={13}><Cliniko />Cliniko call</Bookmark>
        <Spacer />
        <Divider $l={0} $r={31} />
        <Bookmark $w={209} $gap={15}><Folder size={34} color="#c6c6c4" strokeWidth={2} />All Bookmarks</Bookmark>
      </Bookmarks>
    </>
  );
}

function DemoPage() {
  return (
    <Page>
      <PageHeader>
        <Brand><StoryMark w={31} h={49} />storylane</Brand>
        <PageTitle>Heliolus AI | Compliance Matchmaker</PageTitle>
        <GoLink><ExternalBox />Go to Storylane</GoLink>
      </PageHeader>
      <Demo>
        <DemoBar><Dot $c="#e05748" /><Dot $c="#e3c342" /><Dot $c="#73c659" /><Spacer /><Expand /></DemoBar>
        <Viewport>
          <Canvas>
            <Summary>
              <SummaryLabel>Total Strategic Investment</SummaryLabel>
              <SummaryValue>$250K</SummaryValue>
              <SummaryNote>Over 18-24 months</SummaryNote>
            </Summary>
            <Stats>
              {STATS.map((s) => (
                <StatCard key={s.l} $bg={s.bg} $border={s.border} $label={s.label}>
                  <StatValue $c={s.c} $ls={s.ls}>{s.n}</StatValue>
                  {s.l}
                </StatCard>
              ))}
            </Stats>
            <Controls>
              <Filter size={30} color="#6b7280" strokeWidth={2} />
              <ControlLabel $ml={16} $w={95}>Sort by:</ControlLabel>
              <Button $on $w={147} $ml={15}>Urgency</Button>
              <Button $w={173} $ml={16}>Risk Score</Button>
              <Button $w={134} $ml={16}>Impact</Button>
              <ControlLabel $ml={31} $w={69}>Filter:</ControlLabel>
              <Button $on $w={79} $ml={15}>All</Button>
              <Button $w={161} $ml={15}>High Risk</Button>
            </Controls>
            <Matrix>
              <MatrixTitle>Risk Mitigation Strategy Matrix</MatrixTitle>
              <MatrixSub>Prioritized mitigation strategies with business context, adjusted for your Intermediate Compliance (Scale-up Level) maturity level</MatrixSub>
              <HeadRow>
                <Cell>Priority</Cell><Cell>Risk Area</Cell><Cell>Adjusted<br />Risk</Cell><Cell>Urgency</Cell><Cell>Impact</Cell>
                <Cell>Primary Mitigation</Cell><Cell>Timeline</Cell><Cell>Budget</Cell><Cell>Business Context</Cell>
              </HeadRow>
              <BodyRow>
                <Cell $fw={600} $gap={17}><ArrowUp size={29} color="#d8453e" strokeWidth={2} />P1</Cell>
                <Cell>
                  <RiskName>Customer Due Diligence<br />&amp; KYC<BadgeLine><Badge $w={141}>High Risk</Badge></BadgeLine></RiskName>
                </Cell>
                <Cell $gap={12}><Score>8.5</Score><ArrowDown size={29} color="#58b567" strokeWidth={2} /><Delta>4.5</Delta></Cell>
                <Cell><Badge $w={93}>High</Badge></Cell>
                <Cell><Badge $dark $w={130}>Medium</Badge></Cell>
                <Cell>Deploy automated KYC<br />platform with AI-powered<br />document verification<br />suitable for startup<br />traditional banking</Cell>
                <Cell $gap={7}><Clock size={28} color="#6b7280" strokeWidth={2} /><div>3-6<br />months</div></Cell>
                <Cell $fw={600}>$75K</Cell>
                <Cell><Context>Intermediate<br />(Scale-up Level)<br />startup</Context></Cell>
              </BodyRow>
            </Matrix>
          </Canvas>
        </Viewport>
        <Hotspot />
        <Tooltip>
          <TooltipArrow width="30" height="50" viewBox="0 0 30 50"><path d="M30 2 5 20Q1 24 5 28L30 47z" fill="#000" stroke="#5d5a72" strokeWidth="1" /><path d="M27 4h3v42h-3z" fill="#000" /></TooltipArrow>
          {"Focus on high-risk areas that\nrequire immediate\ncompliance intervention."}
        </Tooltip>
        <Widget><StoryMark w={29} h={46} /></Widget>
      </Demo>
    </Page>
  );
}

/* dock tiles drawn on a 73 x 73 grid */
const Art = ({ children }) => <svg width="73" height="73" viewBox="0 0 73 73">{children}</svg>;
const PETALS = ["#f0932f", "#e3d83c", "#a9cf46", "#6cba8a", "#5fa6dc", "#6d74c4", "#b06ab8", "#e5574c"];
const PADS = ["#74de50", "#f4bd42", "#ee913a", "#d93a2c", "#8e9496", "#ea4a63", "#9044cf", "#3a94f3", "#62c9a0"];

function DockBar() {
  return (
    <Dock>
      <DockCell $run><Tile $bg="linear-gradient(#5ac3f8,#3a78ee)"><Art>
        <path d="M41 0C35 14 31 28 31 42h10c0 12 1 22 5 31h27V0z" fill="#dfe4ee" />
        <path d="M19.500 21v6M54 21v6" stroke="#16222e" strokeWidth="3" strokeLinecap="round" />
        <path d="M15 49c11 11 32 11 43 0" fill="none" stroke="#16222e" strokeWidth="2.500" strokeLinecap="round" />
      </Art></Tile></DockCell>
      <DockCell><Tile $bg="#bdbfbf"><Art>{PADS.map((c, i) => <rect key={c} x={12 + (i % 3) * 17.500} y={12 + Math.floor(i / 3) * 18} width="14" height="14" rx="3.500" fill={c} />)}</Art></Tile></DockCell>
      <DockCell><Tile $bg="linear-gradient(#fff,#dcdcdc)"><Art>
        <circle cx="36.500" cy="36.500" r="31" fill="#3487e2" /><circle cx="36.500" cy="36.500" r="28" fill="none" stroke="#b9dcf6" strokeWidth="3" strokeDasharray="1 2.500" />
        <path d="M58 18 41 41l-9-8z" fill="#e5483d" /><path d="M15 55 32 33l9 8z" fill="#f2f4f5" />
      </Art></Tile></DockCell>
      <DockCell><Tile $bg="linear-gradient(#3b70ee,#5cc0fa)"><Art>
        <rect x="11" y="21" width="51" height="32" rx="4" fill="#ededee" /><path d="M12 51 30 36M61 51 43 36M12 22l21 20q3.500 3 7 0l21-20" fill="none" stroke="#a9abae" strokeWidth="1.800" />
      </Art></Tile></DockCell>
      <DockCell $run><Tile $bg="linear-gradient(#86ee82,#4fbd45)"><Art>
        <ellipse cx="36.500" cy="34" rx="27" ry="22.500" fill="#e0f4dd" /><path d="M21 50c0 5-1 8-3 10 5-1 9-4 10-7z" fill="#e0f4dd" />
      </Art></Tile><CountBadge>222</CountBadge></DockCell>
      <DockCell><Tile $bg="#6fd275"><Art>
        <path d="M0 30 43 73H0z" fill="#e48ac4" /><path d="M0 22 50 73H32L0 40z" fill="#f5f3f2" /><path d="M34 25 73 60v13H50L18 40z" fill="#efefef" /><path d="M40 60h22l8 13H40z" fill="#f3c944" />
        <path d="M0 0h20v40L0 22z" fill="#f4f4f4" /><path d="M19 0h17v44H19z" fill="#3a79ee" /><path d="M50 0a24 24 0 0 0 23 22" fill="none" stroke="#d9dadd" strokeWidth="7" />
        <circle cx="27" cy="45" r="18" fill="#fff" /><circle cx="27" cy="45" r="15" fill="#3b79ef" /><path d="M27 34 36 54l-9-5-9 5z" fill="#fff" />
      </Art></Tile></DockCell>
      <DockCell><Tile $bg="#fdfdfd"><Art>{PETALS.map((c, i) => <ellipse key={c} cx="36.500" cy="20" rx="9.500" ry="15" fill={c} fillOpacity=".85" transform={`rotate(${i * 45} 36.5 36.5)`} />)}</Art></Tile></DockCell>
      <DockCell><Tile $bg="linear-gradient(#86ee82,#4fbd45)"><Art>
        <rect x="11" y="21" width="35" height="31" rx="9" fill="#e6f6e4" /><path d="M48 33 58 24q4-2 4 2v21q0 4-4 2L48 41z" fill="#d5efd2" />
      </Art></Tile><CountBadge>2</CountBadge></DockCell>
      <DockCell $run><CalTile><CalMonth>OCT</CalMonth><CalDay>21</CalDay></CalTile></DockCell>
      <DockCell><Tile $bg="#fbfbfa"><Art>{["#3b7bf0", "#e5483b", "#f0992f"].map((c, i) => (
        <g key={c}><circle cx="14.500" cy={18.500 + i * 18} r="4.500" fill={c} /><circle cx="14.500" cy={18.500 + i * 18} r="6.500" fill="none" stroke={c} strokeOpacity=".5" /><path d={`M28 ${18.500 + i * 18}h37`} stroke="#c3c3c8" strokeWidth="2" /></g>
      ))}</Art></Tile></DockCell>
      <DockCell $run><Tile $bg="linear-gradient(#f2f1ee,#e6e5e0)"><Art>
        <rect width="73" height="19" fill="#f7cd47" /><path d="M0 22h73" stroke="#c9c7c2" strokeWidth="2" strokeDasharray="1.500 2" /><path d="M0 36h73M0 54.500h73" stroke="#cfcfcf" strokeWidth="1.500" />
      </Art></Tile></DockCell>
      <DockCell><TvTile $bg="linear-gradient(#26322f,#0c1113)"><FaApple size={27} />tv</TvTile></DockCell>
      <DockCell><Tile $bg="linear-gradient(#ea6377,#e63b42)"><Art>
        <path d="M25 17 54 11v38a7.500 6.500 0 1 1-4-6V22L29 26.500V54a7.500 6.500 0 1 1-4-6z" fill="#fff" />
      </Art></Tile></DockCell>
      <DockCell><Tile $bg="linear-gradient(#b862e2,#6f2bb2)"><Art>
        <g fill="none" stroke="#fff" strokeWidth="3.200" strokeLinecap="round"><path d="M23 55A25 25 0 1 1 50 55" /><path d="M26 44A16 16 0 1 1 47 44" /></g>
        <circle cx="36.500" cy="32.500" r="6.500" fill="#fff" /><path d="M31 44q5.500-5 11 0l-2 17q-3.500 5-7 0z" fill="#fff" />
      </Art></Tile></DockCell>
      <DockCell><Tile $bg="#fff"><Art>
        <path d="M15 15h13l30 43H45L15 22z" fill="#e94a5e" /><path d="M38 15h20v26zM15 32v26h19z" fill="#e94a5e" />
      </Art></Tile></DockCell>
      <DockCell><Tile $bg="#fefdfb"><Art>
        <path d="M0 15h73M0 24h73M0 33h73M0 42h73M0 51h73M0 60h73" stroke="#f6dfc4" strokeWidth="1.500" />
        <text x="5" y="48" fontFamily="Liberation Serif, serif" fontWeight="700" fontSize="56" fill="#f0a83e">“</text>
        <path d="M52 6q6-1 6 3L35 50l-7-2z" fill="#ec9c34" /><path d="M29 44 36 48 29 58l-5-2z" fill="#4a4a4a" /><path d="M24 56l4 2-6 9z" fill="#888" />
      </Art></Tile></DockCell>
      <DockCell><Tile $bg="linear-gradient(#50b5f2,#2f62de)"><Art>
        <g stroke="#fff" strokeWidth="6" strokeLinecap="round"><path d="M40 16 23 43M33 16 55 54M14 44h22M47 44h12M20 53l-3 4" /></g>
      </Art></Tile></DockCell>
      <DockCell $run><Tile $bg="linear-gradient(#d5dee6,#908e8c)"><Art>
        <circle cx="36.500" cy="36.500" r="30" fill="#38393b" /><circle cx="36.500" cy="36.500" r="28" fill="none" stroke="#8f9092" strokeWidth="3" strokeDasharray="2 1.500" />
        <circle cx="36.500" cy="36.500" r="22" fill="#77787b" /><circle cx="36.500" cy="36.500" r="17" fill="#4a4b4e" /><circle cx="36.500" cy="36.500" r="14" fill="none" stroke="#98999c" strokeWidth="3" />
        <path d="M36.500 36.500H56M36.500 36.500 26 19M36.500 36.500 26 54" stroke="#a5a6a9" strokeWidth="3.500" />
      </Art></Tile></DockCell>
      <DockCell><svg width="73" height="84" viewBox="0 0 73 84">
        <g transform="translate(0 -5)"><path d="M4 9 60 0 70 71 14 81z" fill="#f5f5f5" /><path d="M8 12 58 4 67 68 17 76z" fill="#0d1a10" />
          <path d="M12 29 60 21M13 38 61 30M15 47 62 39M16 56 64 48" stroke="#2f7a2a" strokeWidth="1.500" />
          <text x="38" y="61" textAnchor="middle" fontFamily="DejaVu Sans, sans-serif" fontSize="54" fill="#7bea55">𝄞</text></g>
      </svg></DockCell>
      <DockCell><Tile $bg="#fff"><Art>
        <path d="M42 9c-4-2-8 2-18 10-7 6-9 13-5 18 3 5 8 8 11 6 1-3-3-4-2-8 2-3 12-9 15-15 3-5 2-9-1-11z" fill="#1a1a1a" /><path d="M31 64c4 2 8-2 18-10 7-6 9-13 5-18-3-5-8-9-11-7-1 3 3 5 2 9-2 3-12 9-15 15-3 5-2 9 1 11z" fill="#1a1a1a" />
      </Art></Tile></DockCell>
      <DockCell $run><Tile $bg="#000"><SiSpotify size={58} color="#64d862" /></Tile></DockCell>
      <DockCell><Tile $bg="#bdbfbf"><Art>
        <rect x="21" y="5" width="31" height="63" rx="6" fill="#14161c" /><path d="M24 8h25v18C38 34 34 46 24 58z" fill="#f0a9a2" /><path d="M49 26C36 34 34 48 24 58v7h25z" fill="#1f5f86" /><path d="M49 14C38 22 40 32 38 38l11-10z" fill="#7a8794" /><rect x="31" y="7.500" width="11" height="3" rx="1.500" fill="#14161c" />
      </Art></Tile></DockCell>
      <DockDivider $w={43} />
      <DockCell $run><Tile $bg="#f6f7f6"><Art>
        <circle cx="36.500" cy="36.500" r="31" fill="#52a053" /><path d="M9.600 21A31 31 0 0 1 63.400 21H36.500L23 44.500z" fill="#d94c3d" /><path d="M63.400 21A31 31 0 0 1 36.500 67.500L50 44 49 21z" fill="#f0bf42" />
        <circle cx="36.500" cy="36.500" r="15.500" fill="#fff" /><circle cx="36.500" cy="36.500" r="12.300" fill="#4080ea" />
      </Art></Tile></DockCell>
      <DockCell $run><Tile $bg="linear-gradient(#23263a,#10131d)"><Art><g fill="#ec6a30"><rect x="19" y="13" width="19" height="15" rx="2" /><rect x="38" y="29" width="19" height="15" rx="2" /><rect x="19" y="45" width="19" height="15" rx="2" /></g></Art></Tile></DockCell>
      <DockCell $run><ZoomTile $bg="linear-gradient(200deg,#3f7af0,#2358f0 50%,#1d47cf)">zoom</ZoomTile></DockCell>
      <DockDivider $w={39} />
      <DockCell><svg width="60" height="78" viewBox="0 0 60 78" fill="none" stroke="#a9b1b2"><path d="M12 20C12 9 20 3 30 3s19 7 19 17c0 12-19 15-19 31" strokeWidth="5.500" /><circle cx="30" cy="67" r="4.500" fill="#a9b1b2" stroke="none" /></svg></DockCell>
      <DockCell><svg width="62" height="88" viewBox="0 0 62 88">
        <g transform="translate(0 -10)"><path d="M2 10h6V4h30l6 6 16 22v54H2z" fill="#f0f0f0" /><path d="M42 8v24h18z" fill="#fafafa" /><path d="M42 32h18v2.500H40z" fill="#cfcfcf" />
        <path d="M10 18v62M16 18v62M22 18v62M27 18v56" stroke="#c9c9c9" strokeWidth="3.500" strokeDasharray="1.800 1.200" />
        <text x="31" y="81" textAnchor="middle" fontFamily="Inter, sans-serif" fontSize="12" fill="#555">CSV</text></g>
      </svg></DockCell>
      <DockCell><svg width="66" height="84" viewBox="0 4 66 84">
        <path d="M1 8 11 73q2 7 22 7t22-7L65 8z" fill="#6b6f72" /><path d="M10 68q2 12 23 12t23-12q-23 10-46 0z" fill="#9a9d9f" /><ellipse cx="33" cy="8" rx="32" ry="7" fill="#54585a" stroke="#8b9091" strokeWidth="1.800" />
      </svg></DockCell>
    </Dock>
  );
}

export default function App() {
  return (
    <>
      <Global />
      <Desktop>
        <MenuBar>
          <AppleSlot><FaApple size={31} /></AppleSlot>
          <MenuItem $bold $w={143}>Chrome</MenuItem>
          {MENU.map(([t, w]) => <MenuItem key={t} $w={w}>{t}</MenuItem>)}
          <StatusArea>
            <StatusIcons />
            <StatusText $ml={30} $w={151} $ls={0.4}>Tue 21 Oct</StatusText>
            <StatusText $ml={0} $w={68} $ls={-0.4} $tabular>11:52</StatusText>
          </StatusArea>
        </MenuBar>
        <Window>
          <Browser />
          <DemoPage />
        </Window>
        <DockBar />
      </Desktop>
    </>
  );
}
